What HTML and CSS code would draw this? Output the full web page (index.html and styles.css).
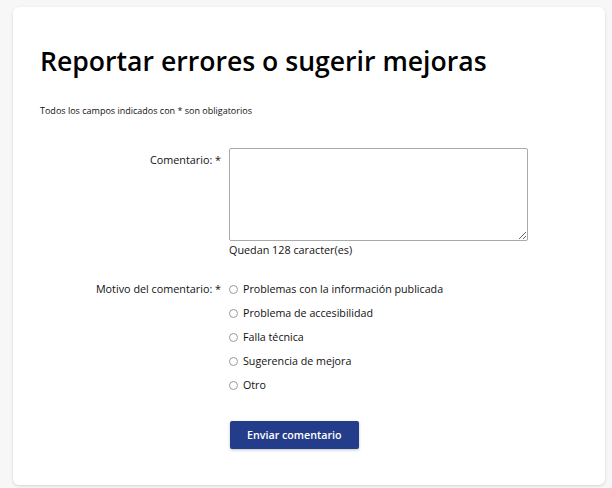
FILE: index.html
```html
<!DOCTYPE html>
<html lang="es">
<head>
  <meta charset="UTF-8" />
  <meta name="viewport" content="width=device-width, initial-scale=1.0"/>
  <title>Reportar errores o sugerir mejoras</title>
  <link rel="stylesheet" href="styles.css">
</head>
<body>

  <div class="card">
    <h1>Reportar errores o sugerir mejoras</h1>
    <p class="note">Todos los campos indicados con * son obligatorios</p>

    <form class="form">
      <div class="row">
        <label class="label label-top" for="comentario">Comentario: *</label>
        <div class="field">
          <textarea id="comentario" maxlength="128"></textarea>
          <div class="counter">Quedan 128 caracter(es)</div>
        </div>
      </div>

      <div class="row">
        <span class="label">Motivo del comentario: *</span>
        <div class="field options">
          <label class="option"><input type="radio" name="motivo"> Problemas con la información publicada</label>
          <label class="option"><input type="radio" name="motivo"> Problema de accesibilidad</label>
          <label class="option"><input type="radio" name="motivo"> Falla técnica</label>
          <label class="option"><input type="radio" name="motivo"> Sugerencia de mejora</label>
          <label class="option"><input type="radio" name="motivo"> Otro</label>
        </div>
      </div>

      <div class="row">
        <span class="label"></span>
        <div class="field">
          <button type="button" class="send-btn">Enviar comentario</button>
        </div>
      </div>
    </form>
  </div>

</body>
</html>
```

FILE: styles.css
```css
body {
  margin: 0;
  padding: 7px 7px 3px 13px;
  background: #f7f7f7;
  font-family: 'Open Sans', sans-serif;
  color: #111;
}

.card {
  background: #fff;
  border-radius: 6px;
  box-shadow: 0 1px 3px rgba(0,0,0,0.15);
  padding: 36px 27px 36px;
  height: 406px;
}

h1 {
  margin: 0;
  font-size: 26.6px;
  font-weight: 600;
  color: #000;
}

.note {
  margin: 25px 0 0;
  font-size: 9px;
}

.form {
  margin-top: 31px;
}

.row {
  display: grid;
  grid-template-columns: 181px 1fr;
  column-gap: 8px;
  margin-bottom: 23px;
}

.row:nth-child(2) {
  margin-bottom: 28px;
}

.label {
  text-align: right;
  font-size: 10.8px;
  line-height: 16px;
}

.label-top {
  padding-top: 4px;
}

.field {
  font-size: 10.7px;
}

textarea {
  display: block;
  width: 299px;
  height: 93px;
  box-sizing: border-box;
  margin: 0;
  border: 1px solid #aaa;
  border-radius: 2px;
  font-family: inherit;
}

.counter {
  font-size: 10.8px;
  line-height: 16px;
  margin-top: 1px;
}

.options {
  display: flex;
  flex-direction: column;
  gap: 8px;
}

.option {
  display: flex;
  align-items: center;
  line-height: 16px;
}

.option input {
  margin: 0 5px 0 0;
  width: 9px;
  height: 9px;
  opacity: 0.75;
}

.send-btn {
  margin-left: 1px;
  background: #243d8a;
  color: #fff;
  border: none;
  border-radius: 2px;
  padding: 0 17px;
  height: 28px;
  font-family: inherit;
  font-weight: 600;
  font-size: 10.7px;
  box-shadow: 0 1px 3px rgba(0,0,0,0.25);
  cursor: pointer;
}
```
